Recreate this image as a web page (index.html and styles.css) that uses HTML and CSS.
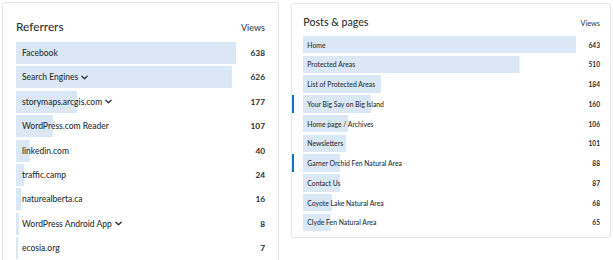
FILE: index.html
```html
<!DOCTYPE html>
<html lang="en">
<head>
<meta charset="utf-8">
<title>Stats</title>
<link rel="stylesheet" href="styles.css">
</head>
<body>
<div class="board">
  <section class="card card-ref">
    <header class="card-head">
      <h2 class="card-title">Referrers</h2>
      <span class="col-label">Views</span>
    </header>
    <ul class="rows">
      <li class="row"><span class="label" style="--w:220px">Facebook</span><span class="num">638</span></li>
      <li class="row"><span class="label" style="--w:215.9px">Search Engines<svg class="chev" viewBox="0 0 8 5"><path d="M1 1l3 3 3-3"/></svg></span><span class="num">626</span></li>
      <li class="row"><span class="label" style="--w:61px">storymaps.arcgis.com<svg class="chev" viewBox="0 0 8 5"><path d="M1 1l3 3 3-3"/></svg></span><span class="num">177</span></li>
      <li class="row"><span class="label" style="--w:36.9px">WordPress.com Reader</span><span class="num">107</span></li>
      <li class="row"><span class="label" style="--w:13.8px">linkedin.com</span><span class="num">40</span></li>
      <li class="row"><span class="label" style="--w:8.3px">traffic.camp</span><span class="num">24</span></li>
      <li class="row"><span class="label" style="--w:5.5px">naturealberta.ca</span><span class="num">16</span></li>
      <li class="row"><span class="label" style="--w:2.8px">WordPress Android App<svg class="chev" viewBox="0 0 8 5"><path d="M1 1l3 3 3-3"/></svg></span><span class="num">8</span></li>
      <li class="row"><span class="label" style="--w:2.4px">ecosia.org</span><span class="num">7</span></li>
    </ul>
  </section>
  <section class="card card-posts">
    <header class="card-head">
      <h2 class="card-title">Posts &amp; pages</h2>
      <span class="col-label">Views</span>
    </header>
    <ul class="rows">
      <li class="row"><span class="label" style="--w:273px">Home</span><span class="num">643</span></li>
      <li class="row"><span class="label" style="--w:216.5px">Protected Areas</span><span class="num">510</span></li>
      <li class="row"><span class="label" style="--w:78.1px">List of Protected Areas</span><span class="num">184</span></li>
      <li class="row is-marked"><span class="label" style="--w:67.9px">Your Big Say on Big Island</span><span class="num">160</span></li>
      <li class="row"><span class="label" style="--w:45px">Home page / Archives</span><span class="num">106</span></li>
      <li class="row"><span class="label" style="--w:42.9px">Newsletters</span><span class="num">101</span></li>
      <li class="row is-marked"><span class="label" style="--w:37.4px">Garner Orchid Fen Natural Area</span><span class="num">88</span></li>
      <li class="row"><span class="label" style="--w:36.9px">Contact Us</span><span class="num">87</span></li>
      <li class="row"><span class="label" style="--w:28.9px">Coyote Lake Natural Area</span><span class="num">68</span></li>
      <li class="row"><span class="label" style="--w:27.6px">Clyde Fen Natural Area</span><span class="num">65</span></li>
    </ul>
  </section>
</div>
</body>
</html>
```
FILE: styles.css
```css
html, body {
  margin: 0;
  padding: 0;
  background: #ffffff;
}
body {
  font-family: Lato, "Liberation Sans", sans-serif;
  color: #2c3338;
}
.board {
  display: flex;
  align-items: flex-start;
  gap: 12px;
  padding: 2px 0 0 2px;
}
.card {
  box-sizing: border-box;
  background: #fff;
  border: 1px solid #e6e8ea;
  border-radius: 3px;
  box-shadow: 0 0 1px rgba(0,0,0,0.04);
}
.card-head {
  display: flex;
  align-items: baseline;
  justify-content: space-between;
}
.card-title {
  margin: 0;
  font-weight: 500;
  color: #2c3338;
}
.col-label {
  font-weight: 500;
  color: #3c434a;
}
.rows {
  list-style: none;
  margin: 0;
  padding: 0;
  display: flex;
  flex-direction: column;
}
.row {
  position: relative;
  display: flex;
  align-items: center;
}
.label {
  flex: 1;
  display: flex;
  align-items: center;
  height: 100%;
  white-space: nowrap;
  background-image: linear-gradient(#dae8f5, #dae8f5);
  background-repeat: no-repeat;
  background-size: var(--w) 100%;
  font-weight: 500;
  color: #2a2f33;
}
.num {
  margin-left: 8px;
  font-weight: 700;
  color: #2a2f33;
  text-align: right;
}
.chev {
  fill: none;
  stroke: #2a2f33;
  stroke-width: 1.5;
  stroke-linecap: round;
  stroke-linejoin: round;
}

/* Referrers card */
.card-ref {
  width: 277px;
  height: 270px;
  padding: 17.4px 13px 0 13px;
}
.card-ref .card-title {
  font-size: 11.8px;
  line-height: 14px;
}
.card-ref .col-label {
  font-size: 9px;
  line-height: 14px;
}
.card-ref .rows {
  margin-top: 6.6px;
  gap: 2.4px;
}
.card-ref .row {
  height: 22px;
}
.card-ref .label {
  padding-left: 6px;
  font-size: 8.5px;
}
.card-ref .num {
  font-size: 8.3px;
}
.card-ref .chev {
  width: 7px;
  height: 5px;
  margin-left: 3px;
}

/* Posts card */
.card-posts {
  width: 320px;
  height: 235px;
  margin-top: 1px;
  padding: 12.4px 10px 0 11.3px;
}
.card-posts .card-title {
  font-size: 10.6px;
  line-height: 13px;
}
.card-posts .col-label {
  font-size: 7.3px;
  line-height: 13px;
}
.card-posts .rows {
  margin-top: 5.6px;
  gap: 2.25px;
}
.card-posts .row {
  height: 17.5px;
}
.card-posts .label {
  padding-left: 4px;
  font-size: 6.8px;
}
.card-posts .num {
  font-size: 6.6px;
}
.card-posts .is-marked::before {
  content: "";
  position: absolute;
  left: -11.3px;
  top: 0;
  bottom: 0;
  width: 2px;
  background: #0675c4;
}
```
